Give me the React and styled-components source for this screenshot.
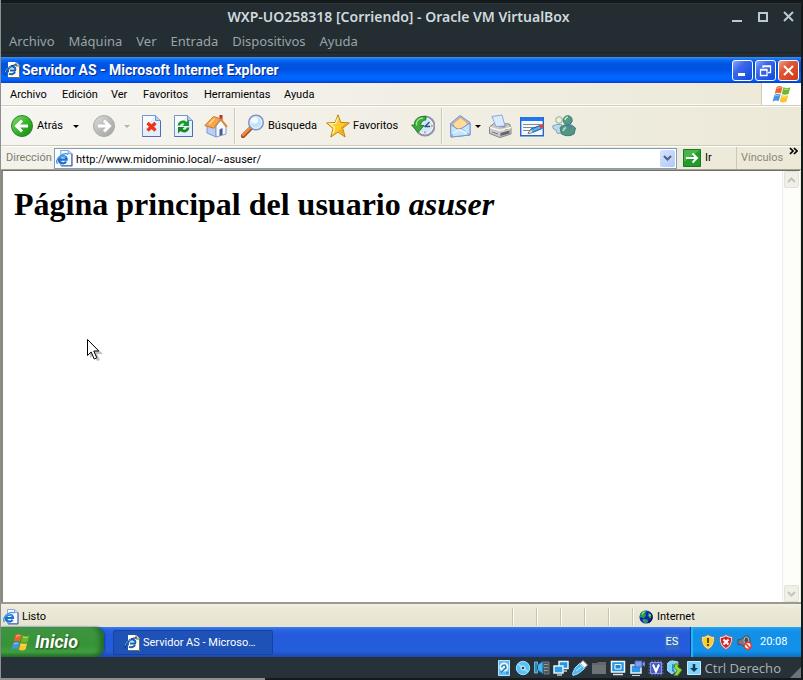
import React from "react";
import styled, { createGlobalStyle } from "styled-components";

const ui = `"Noto Sans", "Open Sans", sans-serif`;
const guest = `Roboto, "Noto Sans", sans-serif`;

const Global = createGlobalStyle`
  * { box-sizing: border-box; }
  body { margin: 0; background: #16191b; }
  button { border: 0; margin: 0; padding: 0; background: none; color: inherit; font: inherit; white-space: nowrap; }
  svg { display: block; flex: none; }
`;

const Backdrop = styled.div`
  display: flex;
  flex-direction: column;
  min-height: 100vh;
  padding: 3px 2px 2px 1px;
  background: linear-gradient(90deg, #8f8f8f 0 33%, #16191b 33%);
`;

const HostWindow = styled.div`
  flex: 1;
  display: flex;
  flex-direction: column;
  background: #232d32;
  box-shadow: 0 -3px 0 #14191b;
`;

const HostTitle = styled.header`
  display: grid;
  grid-template-columns: 1fr auto 1fr;
  align-items: center;
  height: 27px;
  padding-right: 5px;
  border-top: 1px solid #2c363a;
  color: #d0d9dc;
  font: 600 14px/20px ${ui};
`;

const HostHeading = styled.span`
  grid-column: 2;
`;

const HostControls = styled.div`
  display: flex;
  justify-content: flex-end;
  gap: 12px;
`;

const HostControl = styled.button`
  width: 14px;
  height: 14px;
  color: #bdc9ce;
`;

const HostMenu = styled.nav`
  display: flex;
  gap: 14px;
  height: 23px;
  padding-left: 8px;
  border-bottom: 1px solid #182023;
  color: #9aa4a8;
  font: 13px/22px ${ui};
`;

const Guest = styled.main`
  flex: 1;
  display: flex;
  flex-direction: column;
  margin-top: 4px;
  background: #ece9d8;
  color: #000;
  font: 11px/16px ${guest};
`;

const IETitle = styled.header`
  display: flex;
  align-items: center;
  gap: 2px;
  height: 26px;
  padding: 0 2px 0 3px;
  background: linear-gradient(#3c8cf5 0, #0a6af2 3px, #0054e3 7px, #0052e0 13px, #0066ff 19px, #0064fb 23px, #003dd0 26px);
  color: #fff;
`;

const IEHeading = styled.h2`
  flex: 1;
  margin: 0;
  font: 700 14px/20px ${guest};
  text-shadow: 1px 1px 0 #0a2a80;
`;

const WinButton = styled.button`
  display: grid;
  place-items: center;
  width: 21px;
  height: 21px;
  border: 1px solid #fff;
  border-radius: 3px;
  background: ${(p) =>
    p.$close
      ? "linear-gradient(135deg, #f0a088, #e0583a 35%, #cf3a12)"
      : "linear-gradient(135deg, #8aa8f8, #3b68ec 35%, #1048dc)"};
`;

const MenuRow = styled.div`
  display: flex;
  height: 23px;
  border-bottom: 1px solid #cfccb9;
  background: linear-gradient(90deg, #f6f5f2, #ece9d8);
  box-shadow: inset 0 -1px 0 #fbfaf4;
`;

const MenuItems = styled.nav`
  flex: 1;
  display: flex;
  gap: 16px;
  padding-left: 9px;
  line-height: 21px;
`;

const MenuItem = styled.button`
  width: ${(p) => p.$w}px;
  text-align: left;
`;

const FlagBox = styled.div`
  display: grid;
  place-items: center;
  width: 40px;
  border-left: 1px solid #cfccb9;
  background: #fff;
`;

const Toolbar = styled.div`
  display: flex;
  align-items: center;
  gap: 8px;
  height: 40px;
  padding-left: 9px;
  border-top: 1px solid #fff;
  border-bottom: 1px solid #cfccb9;
  background: linear-gradient(90deg, #f6f5f1, #ece9d8);
`;

const ToolButton = styled.button`
  display: flex;
  align-items: center;
  gap: 3px;
  width: ${(p) => p.$w || 24}px;
  height: 32px;
`;

const Caret = styled.span`
  margin-left: auto;
  margin-right: ${(p) => p.$inset || 0}px;
  border: solid transparent;
  border-width: 3px 3px 0;
  border-top-color: ${(p) => (p.$dim ? "#b8b5a6" : "#000")};
`;

const Divider = styled.span`
  width: 1px;
  height: 36px;
  margin: 0 -2px;
  background: #cbc8b6;
  box-shadow: 1px 0 0 #faf9f3;
`;

const AddressRow = styled.form`
  display: flex;
  align-items: center;
  height: 24px;
  padding: 0 3px 0 5px;
  border-top: 1px solid #fff;
  border-bottom: 1px solid #a5a292;
  background: linear-gradient(90deg, #f3f2ec, #ece9d8);
  line-height: 18px;
`;

const AddressLabel = styled.label`
  width: 48px;
  color: #7d7b70;
`;

const Combo = styled.div`
  flex: 1;
  display: flex;
  align-items: center;
  height: 21px;
  padding: 1px;
  border: 1px solid #7f9db9;
  background: #fff;
`;

const AddressInput = styled.input`
  flex: 1;
  min-width: 0;
  height: 19px;
  border: 0;
  padding: 2px 3px 0;
  outline: 0;
  background: none;
  font: 11px/16px ${guest};
`;

const DropButton = styled.button`
  display: grid;
  place-items: center;
  width: 15px;
  height: 17px;
  border-radius: 2px;
  background: linear-gradient(135deg, #d5e2ff, #b1c9f7);
`;

const GoButton = styled.button`
  display: flex;
  align-items: center;
  gap: 4px;
  width: 53px;
  margin-left: 6px;
`;

const Links = styled.button`
  display: flex;
  justify-content: space-between;
  width: 62px;
  height: 22px;
  padding-left: 4px;
  border-left: 1px solid #cbc8b6;
  color: #8a887c;
  line-height: 22px;
`;

const Viewport = styled.section`
  position: relative;
  flex: 1;
  display: flex;
  margin-right: 1px;
  border: solid #716f64;
  border-width: 1px 0 0 2px;
  border-left-color: #8b897c;
  background: #fff;
`;

const Page = styled.article`
  flex: 1;
  padding: 15px 11px;

  h1 {
    margin: 0;
    font: 700 32px/36px "Liberation Serif", "Times New Roman", serif;
  }
`;

const Scrollbar = styled.div`
  display: flex;
  flex-direction: column;
  justify-content: space-between;
  width: 18px;
  border-left: 1px solid #eeede5;
  background: #fdfdfa;
`;

const ScrollButton = styled.button`
  display: grid;
  place-items: center;
  height: 17px;
  margin: 0 1px;
  border: 1px solid #e4e2d6;
  border-radius: 2px;
  background: #f1f0e8;
`;

const Pointer = styled.svg`
  position: absolute;
  left: 84px;
  top: 168px;
`;

const StatusBar = styled.footer`
  display: flex;
  align-items: center;
  height: 25px;
  border-top: 2px solid #9c9a8c;
  padding: 2px 0 0 2px;
  background: linear-gradient(#f2f0e4, #ece9d8 5px, #e6e3d0);
`;

const StatusText = styled.div`
  flex: 1;
  display: flex;
  align-items: center;
  gap: 3px;
`;

const StatusCell = styled.div`
  display: flex;
  align-items: center;
  gap: 4px;
  width: ${(p) => p.$w || 24}px;
  height: 18px;
  padding-left: 6px;
  border-left: 1px solid #c8c5b3;
  box-shadow: inset 1px 0 0 #fbfaf3;
`;

const Taskbar = styled.div`
  display: flex;
  height: 30px;
  background: linear-gradient(#3a80f0 0, #2a63e0 3px, #245bdc 8px, #245edb 24px, #1c48b4 30px);
  color: #fff;
`;

const StartButton = styled.button`
  display: flex;
  align-items: center;
  gap: 4px;
  width: 103px;
  padding-left: 9px;
  border-radius: 0 9px 9px 0;
  background: linear-gradient(#5aa85a 0, #3d953d 4px, #369336 18px, #419f41 25px, #26752a 30px);
  box-shadow: inset -4px 0 5px #23692a, 1px 0 2px #163f9e;
  font: italic 700 18px/26px ${guest};
  text-shadow: 1px 1px 2px #1b4d1d;
`;

const TaskButton = styled.button`
  display: flex;
  align-items: center;
  gap: 3px;
  width: 160px;
  height: 25px;
  margin: 3px auto 0 9px;
  padding-left: 10px;
  border: 1px solid #1742a0;
  border-radius: 2px;
  background: #1e52b7;
  line-height: 18px;
`;

const Language = styled.button`
  align-self: center;
  width: 14px;
  height: 16px;
  margin-right: 12px;
  background: #316ac5;
`;

const Tray = styled.div`
  display: flex;
  align-items: center;
  gap: 4px;
  width: 110px;
  padding-left: 8px;
  border-left: 2px solid #1cb8f4;
  background: linear-gradient(#22a8f4 0, #1290e8 4px, #1291ea 24px, #0d70c4 30px);
  box-shadow: -1px 0 0 #0f3a92;
  line-height: 18px;
`;

const Clock = styled.time`
  margin-left: 4px;
`;

const HostStatus = styled.footer`
  display: flex;
  align-items: center;
  justify-content: flex-end;
  gap: 3px;
  height: 21px;
  background: #263238;
  color: #a3adb1;
  font: 13px/20px ${ui};
`;

const HostKey = styled.span`
  margin-right: 6px;
`;

const S = ({ w = 16, h = w, v = "0 0 16 16", children }) => (
  <svg width={w} height={h} viewBox={v} fill="none" aria-hidden="true">{children}</svg>
);

const Letter = () => (
  <>
    <path d="M2.500 9H10C9.800 4.800 3 4.600 2.700 9c0 4 5.300 4.600 6.800 1.800" stroke="#1c6fce" strokeWidth="2.200" />
    <path d="M3 7.500C4 5 8 5 9 7.300" stroke="#6cc0f4" />
  </>
);

const IEIcon = ({ size = 16 }) => (
  <S w={size}>
    <path d="M4.500.5h7l3.500 3v11H4.500z" fill="#f6f9ff" stroke="#8ea8da" />
    <path d="M11.500.5v3H15" fill="#c8d8f6" stroke="#8ea8da" />
    <path d="M15 3.500v11.500H5" stroke="#49619c" />
    <Letter />
    <path d="M1.500 13C-2 9.500 6 1.500 11.500 4" stroke="#3c9be8" strokeWidth="1.300" />
  </S>
);

const IEDocIcon = () => (
  <S>
    <path d="M4 0h8l4 4v12H4z" fill="#fffdf0" />
    <path d="M12 0v4h4" fill="#d5d2bd" stroke="#77746a" />
    <path d="M15.500 4v11.500H4" stroke="#6c6a60" />
    <path d="M4 10.500C3 6 7 3.500 10 5c1.700.8 1.500 2.500 1 3.500H6m5 1.500c-1 2-4 3-6 1.500" stroke="#1760b8" strokeWidth="2" />
    <path d="M6 6.500c1-1 3-1 3.500 0" stroke="#5dbcf1" />
    <path d="M1.500 13.500C-1 9 7 2 12.500 3" stroke="#153a80" strokeWidth="1.400" />
    <path d="M1 10.500c1-3 3-5 6-6" stroke="#61b6ed" />
  </S>
);

const Flag = ({ w = 20 }) => (
  <S w={w} v="0 0 20 20">
    <path d="M5.200 3.200C7 1.600 8.800 1.800 11 2.800L9.400 9C7.300 8 5.500 8 3.500 9.400z" fill="#f0622a" />
    <path d="M11.900 3.200c2 1 4 1 6.600-.1l-1.700 6.300c-2.300 1.200-4.500 1-6.500.1z" fill="#6cb928" />
    <path d="M3.200 10.400c2-1.300 3.800-1.400 5.900-.4l-1.700 6.300c-2-1-3.900-.9-6 .5z" fill="#4692e4" />
    <path d="M10 10.500c2 1 4.200 1.100 6.500 0l-1.700 6.200c-2.300 1.200-4.300 1.100-6.400.1z" fill="#fcc52a" />
    <path d="M5.500 4.500q2.200-1.700 4.500-.8M12.500 4.700q2 .8 4.200.2M3.500 11.600q2-1.300 4.300-.5M10.500 12q2 .8 4 .2" stroke="#fff" strokeOpacity=".45" />
  </S>
);

const RoundArrow = ({ forward }) => (
  <S w={24} v="0 0 24 24">
    <defs>
      <linearGradient id={forward ? "fw" : "bk"} x1="0" y1="0" x2="1" y2="1">
        <stop stopColor={forward ? "#dededc" : "#8bdc72"} />
        <stop offset=".5" stopColor={forward ? "#bbbbb9" : "#36b52c"} />
        <stop offset="1" stopColor={forward ? "#a4a4a2" : "#168514"} />
      </linearGradient>
    </defs>
    <circle cx="12" cy="12" r="10.500" fill={forward ? "url(#fw)" : "url(#bk)"} stroke={forward ? "#a9a9a6" : "#27852a"} />
    <path d={forward ? "M6 12h11M12 6.500l5.500 5.500-5.500 5.500" : "M18 12H7M12 6.500 6.500 12l5.500 5.500"} stroke="#fff" strokeWidth="3" />
  </S>
);

const Sheet = ({ children }) => (
  <S w={24} v="0 0 24 24">
    <path d="M2.500 1.500h13l5 5v16h-18z" fill="#e3eeff" stroke="#7692cf" />
    <path d="M3 2h12l-12 14z" fill="#fff" fillOpacity=".7" />
    <path d="M15.500 1.500v5h5" fill="#b5cdf6" stroke="#7692cf" />
    <path d="M20.500 7v15.500h-18" stroke="#506bb0" />
    {children}
  </S>
);

const Stop = () => (
  <Sheet><path d="m7.500 9 8 7.500m0-7.500-8 7.500" stroke="#ee3514" strokeWidth="3.400" /></Sheet>
);

const Refresh = () => (
  <Sheet>
    <path d="M5.500 11.500C6.500 6 12 5.500 14.500 8L17 5.500V12h-6.500l2-2c-1.500-1.200-3.500-.8-4.500 1.500z" fill="#1a9a24" />
    <path d="M17.500 13.500C16.500 19 11 19.500 8.500 17L6 19.500V13h6.500l-2 2c1.500 1.200 3.500.8 4.500-1.500z" fill="#118a1c" />
  </Sheet>
);

const Home = () => (
  <S w={24} v="0 0 24 24">
    <path d="M15.500 1h3v8h-3z" fill="#b3362c" />
    <path d="M3 12v7l9 4V11z" fill="#b9cdf5" stroke="#7e97cf" />
    <path d="m12 12 5-6 5 7v7l-10 3z" fill="#f6f8ff" stroke="#8698c5" />
    <path d="M.8 11.500 9.500 2.500l7 2.300-6.700 9.500z" fill="#f7a545" stroke="#d07a28" />
    <path d="m16.500 4.800 6.500 8" stroke="#e08a35" strokeWidth="2" />
    <path d="M15.500 15.500 18.500 14v6.800l-3 1z" fill="#455a98" />
    <path d="M5 10.500 10.500 4.500" stroke="#ffd69a" strokeWidth="1.500" />
  </S>
);

const Search = () => (
  <S w={24} v="0 0 24 24">
    <path d="m10 14-8 8" stroke="#9d512a" strokeWidth="4.500" strokeLinecap="round" />
    <path d="m9.500 13.500-7.500 7.500" stroke="#f18a45" strokeWidth="2.500" strokeLinecap="round" />
    <circle cx="15" cy="8.500" r="7.300" fill="#bfe3fc" stroke="#8392c4" strokeWidth="1.500" />
    <circle cx="15" cy="8.500" r="5.700" stroke="#e8f6ff" />
    <ellipse cx="13.500" cy="6.500" rx="3.500" ry="3" fill="#f5fcff" />
  </S>
);

const Star = () => (
  <S w={24} v="0 0 24 24">
    <path d="m12 .8 2.800 7.600 8.600.5-6.700 5.300 2.400 8.800-7.100-5-7.200 5 2.300-8.600L.6 9l8.500-.6z" fill="#ffcb30" stroke="#bb820c" strokeLinejoin="round" />
    <path d="m12 3.500-2.300 5.900-5.700.4 4.500 3.800-1.500 6" stroke="#fff0a2" strokeWidth="1.500" />
    <path d="m13 16 4 3.300-1.500-5.300 4.500-4" stroke="#eda716" strokeWidth="1.300" />
  </S>
);

const History = () => (
  <S w={24} v="0 0 24 24">
    <circle cx="14" cy="12" r="9.500" fill="#cfe7f8" stroke="#8b97a8" strokeWidth="2" />
    <circle cx="14" cy="12" r="7.800" stroke="#f4fbff" />
    <path d="m13.500 13 5-5M13.500 12.500H19" stroke="#2c4c80" strokeWidth="1.300" />
    <path d="M14 4.500v2m0 11v2m6-7.500h2" stroke="#ee7951" strokeWidth="1.500" />
    <path d="M15 2.500C6 1.500 3 7 3.500 11H.7L7 18.500l6-7H9.500c0-3 2-5 5.500-6z" fill="#3aaa38" stroke="#227e2d" />
    <path d="M12 4c-5 0-7 4-6.500 7.500" stroke="#a5e58f" strokeWidth="1.300" />
  </S>
);

const Mail = () => (
  <S w={24} v="0 0 24 24">
    <path d="M2.500 9.500 12 1.500l10 7V21l-19 2z" fill="#aabdf0" stroke="#7c8cca" />
    <path d="m5 9.500 7.500-6 7 5.500-1.500 5-11 1z" fill="#ffdc9a" stroke="#dfa258" />
    <path d="M2.500 10.500 11 16l11-7V21l-19 2z" fill="#c3e6fc" stroke="#7c91d0" />
    <path d="m3 22.500 7-7m12 5.500-8.500-6" stroke="#7c91d0" />
    <path d="m5 20 5-4h3l6 3.500" stroke="#eefaff" strokeWidth="1.500" />
  </S>
);

const Printer = () => (
  <S w={24} v="0 0 24 24">
    <path d="m1.500 13 5-4 15 1 1.500 4v6l-11 3.500-10.500-4z" fill="#c9c9c8" stroke="#848487" />
    <path d="m7 10.500 11 .5-1.500 2.500-8-.8z" fill="#77777a" />
    <path d="M4 2.500 14 1l3 11-9 .5z" fill="#dceaff" stroke="#89a8df" />
    <path d="m2 13.500 10 3 11-3" stroke="#f7f7f5" strokeWidth="1.500" />
    <path d="m12.500 19 9-2.500v3l-9 2.500z" fill="#65656a" />
    <path d="m4 18 6 2" stroke="#77777c" />
    <path d="M17 15.500h3" stroke="#dfae4f" />
  </S>
);

const Edit = () => (
  <S w={24} v="0 0 24 24">
    <path d="M.7 3.700h22.600v18H.7z" fill="#f6faff" stroke="#2467cf" strokeWidth="1.400" />
    <path d="M1 3h22v4H1z" fill="#2377ea" />
    <path d="M3 10.500h17M3 13.500h16M3 16.500h8" stroke="#838b99" />
    <path d="M8 19.500 11 15l9-3.500 2 3-9.500 4z" fill="#55aef1" stroke="#235690" />
    <path d="m8 19.500 3-4 1.500 3z" fill="#f5cf8c" />
    <circle cx="21.500" cy="12" r="2" fill="#e54324" />
  </S>
);

const People = () => (
  <S w={24} v="0 0 24 24">
    <path d="m1.500 15-1-3 4-1.500h5l2 8-6 1-2-4z" fill="#b9dae8" stroke="#7ca3bf" />
    <circle cx="7" cy="6" r="3.300" fill="#edf0cd" stroke="#91aaaa" />
    <path d="M9.500 20 8 13.500 12 11h7.500l4 3-1.500 6q-6 3.500-12.500 0z" fill="#4f997e" stroke="#44747c" />
    <circle cx="15.700" cy="6.200" r="4.500" fill="#529c86" stroke="#41767d" />
    <path d="M13 6q.5-3 3-3M11 17q1-3 3-3.500" stroke="#b9e3bd" strokeWidth="1.700" />
    <path d="m16 12 1 6 3-6" fill="#5d7dba" />
  </S>
);

const Go = () => (
  <S w={18} v="0 0 18 18">
    <path d="M.5.5h17v17H.5z" fill="#239b2b" stroke="#19782a" />
    <path d="M1 1h16L1 13z" fill="#62c45a" fillOpacity=".6" />
    <path d="M3 9h11M9.500 4.500 14 9l-4.500 4.500" stroke="#fff" strokeWidth="2" />
  </S>
);

const Globe = () => (
  <S w={14}>
    <circle cx="8" cy="8" r="7.500" fill="#1420c0" />
    <path d="M2 4c2-3 6-4 7-2L7 4l1 2-2 3-5-1zM11 3l4 3v4l-3-1-2-3zM5 10l5 1v3l-4 1-2-3z" fill="#22a545" />
    <path d="m3 5 3-3M12 5l1 2" stroke="#9ade74" strokeWidth="1.500" />
    <path d="M14 4q3 6-3 10.500" stroke="#091040" strokeWidth="1.500" />
  </S>
);

const Shield = ({ red }) => (
  <S w={14} h={16} v="1 0 14 16">
    <path d="M8 .5c2 1.600 4 2 6.500 2 .2 6-1 10.500-6.500 13-5.500-2.500-6.700-7-6.500-13 2.500 0 4.500-.4 6.500-2z" fill="#dfe3e6" stroke="#77727a" />
    <path d="M8 2.200c1.700 1 3.200 1.600 5.200 1.700 0 5-1.400 8-5.200 10C4.200 12 2.800 9 2.800 4c2-.1 3.500-.7 5.200-1.800z" fill={red ? "#da2029" : "#fbd01a"} />
    {red ? <path d="m5.500 5.500 5 5m0-5-5 5" stroke="#fff" strokeWidth="2" /> : <path d="M8 4v5m0 1v2" stroke="#3d350d" strokeWidth="1.700" />}
  </S>
);

const Muted = () => (
  <S w={15}>
    <path d="M1 5h3l5-4h3q4 5 0 10L9 13l-5-3H1z" fill="#777a80" stroke="#44474f" />
    <ellipse cx="10" cy="6" rx="2.500" ry="4" fill="#4a4d54" stroke="#b9bcc2" />
    <circle cx="11.500" cy="11.500" r="3.700" fill="#fff" stroke="#df3e31" strokeWidth="1.700" />
    <path d="m9 9 5 5" stroke="#df3e31" strokeWidth="1.700" />
  </S>
);

const deviceIcons = [
  ["Discos duros", <>
    <path d="M2.500.500h11v15h-11z" fill="#5dbcf4" stroke="#b9e6ff" />
    <circle cx="8" cy="7" r="4.500" fill="#eefaff" />
    <path d="M6 7.500A2 2 0 1 1 8.500 9L5 12.500" stroke="#247bb4" strokeWidth="1.500" />
    <path d="M10 13h2.500" stroke="#176596" />
  </>],
  ["Unidades ópticas", <>
    <circle cx="8" cy="8" r="6.700" fill="#55c3f8" stroke="#a5e4ff" />
    <path d="m8 8-5-4M8 8l5 4" stroke="#8edcff" strokeWidth="2" />
    <circle cx="8" cy="8" r="2" fill="#17506e" stroke="#fff" />
  </>],
  ["Audio", <>
    <path d="M9 2h6v12h-5V9z" fill="#4b5458" stroke="#747e82" />
    <path d="M10 4.500h4M10 7.500h4M10 10.500h4" stroke="#929b9e" />
    <path d="M.5 2h3v11h-3z" fill="#2f86b8" stroke="#66bbe5" />
    <path d="M3.500 5 9 1v13l-5.500-4z" fill="#46b4ef" stroke="#205f82" />
  </>],
  ["Red", <>
    <path d="M6 1.500h9v7H6z" fill="#2297e4" stroke="#e6f4fc" strokeWidth="1.500" />
    <path d="M1 6h9v7H1z" fill="#2b9fe8" stroke="#e6f4fc" strokeWidth="1.500" />
    <path d="M4 15h5M10 11h4" stroke="#bac9d1" strokeWidth="1.500" />
  </>],
  ["USB", <>
    <path d="m11 .5 4.500 4.500-3 3L8 3.500z" fill="#fff" stroke="#8b959a" />
    <path d="m7.500 3.500 5 5-6 5-5.500 2-.5-2L3 8z" fill="#4db9f5" stroke="#a1e0ff" />
    <path d="m4 11 5-4" stroke="#b6ebff" />
  </>],
  ["Carpetas compartidas", <>
    <path d="M1 3h5l1-1h8v12H1z" fill="#646769" /><path d="M1 5h14v9H1z" fill="#6f7274" />
  </>],
  ["Pantalla", <>
    <path d="M1.500 1.500h13v10.500h-13z" fill="#2496e3" stroke="#eef8fc" strokeWidth="1.500" />
    <path d="M5 4.500h6v4.500H5z" fill="#1b85cf" stroke="#fff" />
    <path d="M3 14.500h10" stroke="#dce4e7" strokeWidth="1.500" />
  </>],
  ["Grabación", <>
    <path d="M2 5h10v8H2z" fill="#2a99e2" stroke="#e7f4fc" strokeWidth="1.500" />
    <path d="M6 1h7v6H6zM13 4l3-3v6z" fill="#7e9cf0" stroke="#4b63ba" />
    <path d="M3 15.500h8" stroke="#c7d6df" />
  </>],
  ["Procesador", <>
    <path d="M4 .500v15M7 .500v15M10 .500v15M13 .500v15M.5 4h15M.5 7h15M.5 10h15M.5 13h15" stroke="#6678cb" />
    <path d="M2.500 2.500h11v11h-11z" fill="#4a5cc4" stroke="#8899ed" />
    <path d="m5 4.500 3 7 3-7" stroke="#fff" strokeWidth="2" />
  </>],
  ["Integración del ratón", <>
    <path d="M6 1a6 6 0 0 0-5 10l4 3 4-3 2-9z" fill="#7bd4fb" stroke="#a9e5ff" />
    <path d="m5 4 4 1v3L6 8l3 6-4-3z" fill="#318ac4" />
    <path d="M8 4h4l-1.500 2.500L15 10l-4.500 5.500H7l3-5-3-3z" fill="#92d840" stroke="#4e8b24" />
  </>],
  ["Captura del teclado", <>
    <path d="M1.500 1.500h13v13h-13z" fill="#7ed3ff" stroke="#c0edff" />
    <path d="M8 4v6" stroke="#123b56" strokeWidth="2.500" />
    <path d="M4 8h8l-4 4z" fill="#123b56" />
  </>],
];

const Chevron = ({ up, color }) => (
  <S w={9} h={6} v="0 0 9 6"><path d={up ? "M1 5l3.500-3.500L8 5" : "m1 1 3.500 3.500L8 1"} stroke={color} strokeWidth="2" /></S>
);

export default function App() {
  return (
    <Backdrop>
      <Global />
      <HostWindow>
        <HostTitle>
          <HostHeading>WXP-UO258318 [Corriendo] - Oracle VM VirtualBox</HostHeading>
          <HostControls>
            <HostControl aria-label="Minimizar máquina"><S w={14} v="0 0 14 14"><path d="M2 11h10" stroke="currentColor" strokeWidth="2" /></S></HostControl>
            <HostControl aria-label="Maximizar máquina"><S w={14} v="0 0 14 14"><path d="M3 3h8v8H3z" stroke="currentColor" strokeWidth="2" /></S></HostControl>
            <HostControl aria-label="Cerrar máquina"><S w={14} v="0 0 14 14"><path d="m2 2 9 9m0-9-9 9" stroke="currentColor" strokeWidth="2" /></S></HostControl>
          </HostControls>
        </HostTitle>
        <HostMenu>
          {["Archivo", "Máquina", "Ver", "Entrada", "Dispositivos", "Ayuda"].map((t) => <button key={t}>{t}</button>)}
        </HostMenu>
        <Guest>
          <IETitle>
            <IEDocIcon />
            <IEHeading>Servidor AS - Microsoft Internet Explorer</IEHeading>
            <WinButton aria-label="Minimizar"><S w={15} v="0 0 15 15"><path d="M3 11.500h7" stroke="#fff" strokeWidth="3" /></S></WinButton>
            <WinButton aria-label="Restaurar"><S w={15} v="0 0 15 15"><path d="M5 5V3h7.500v6.500H10M5 3.500h8M2.500 6.500H9v6H2.500zM2 7h7" stroke="#fff" strokeWidth="1.300" /></S></WinButton>
            <WinButton $close aria-label="Cerrar"><S w={15} v="0 0 15 15"><path d="m3 3 9 9m0-9-9 9" stroke="#fff" strokeWidth="2" /></S></WinButton>
          </IETitle>
          <MenuRow>
            <MenuItems>
              {[["Archivo", 36], ["Edición", 33], ["Ver", 16], ["Favoritos", 45], ["Herramientas", 64], ["Ayuda", 32]].map(([t, w]) => <MenuItem key={t} $w={w}>{t}</MenuItem>)}
            </MenuItems>
            <FlagBox><Flag w={21} /></FlagBox>
          </MenuRow>
          <Toolbar>
            <ToolButton $w={74}><RoundArrow />Atrás<Caret $inset={5} /></ToolButton>
            <ToolButton $w={40} disabled aria-label="Adelante"><RoundArrow forward /><Caret $dim $inset={2} /></ToolButton>
            <ToolButton aria-label="Detener"><Stop /></ToolButton>
            <ToolButton aria-label="Actualizar"><Refresh /></ToolButton>
            <ToolButton aria-label="Inicio"><Home /></ToolButton>
            <Divider />
            <ToolButton $w={77}><Search />Búsqueda</ToolButton>
            <ToolButton $w={77}><Star />Favoritos</ToolButton>
            <ToolButton aria-label="Historial"><History /></ToolButton>
            <Divider />
            <ToolButton $w={32} aria-label="Correo"><Mail /><Caret /></ToolButton>
            <ToolButton aria-label="Imprimir"><Printer /></ToolButton>
            <ToolButton aria-label="Modificar"><Edit /></ToolButton>
            <ToolButton aria-label="Messenger"><People /></ToolButton>
          </Toolbar>
          <AddressRow onSubmit={(e) => e.preventDefault()}>
            <AddressLabel htmlFor="address">Dirección</AddressLabel>
            <Combo>
              <IEIcon size={17} />
              <AddressInput id="address" defaultValue="http://www.midominio.local/~asuser/" />
              <DropButton type="button" aria-label="Direcciones recientes"><Chevron color="#4d6185" /></DropButton>
            </Combo>
            <GoButton><Go />Ir</GoButton>
            <Links type="button">Vínculos<S w={9} h={11} v="0 0 9 11"><path d="m1 1 3 3-3 3m4-6 3 3-3 3" stroke="#000" strokeWidth="1.700" /></S></Links>
          </AddressRow>
          <Viewport>
            <Page><h1>Página principal del usuario <em>asuser</em></h1></Page>
            <Scrollbar>
              <ScrollButton disabled aria-label="Subir"><Chevron up color="#c6c4b8" /></ScrollButton>
              <ScrollButton disabled aria-label="Bajar"><Chevron color="#c6c4b8" /></ScrollButton>
            </Scrollbar>
            <Pointer width="18" height="24" viewBox="0 0 18 24" aria-hidden="true">
              <path d="M3 3v16l4-3 3 6 3-1-3-6h6z" fill="#000" fillOpacity=".25" />
              <path d="M.5.5v16l3.700-3.500 3 7 2.600-1.200-3-6.800h5z" fill="#fff" stroke="#000" />
            </Pointer>
          </Viewport>
          <StatusBar>
            <StatusText><IEIcon />Listo</StatusText>
            <StatusCell /><StatusCell /><StatusCell /><StatusCell /><StatusCell />
            <StatusCell $w={169}><Globe />Internet</StatusCell>
          </StatusBar>
          <Taskbar>
            <StartButton><Flag w={21} />Inicio</StartButton>
            <TaskButton><IEDocIcon />Servidor AS - Microso…</TaskButton>
            <Language>ES</Language>
            <Tray><Shield /><Shield red /><Muted /><Clock>20:08</Clock></Tray>
          </Taskbar>
        </Guest>
        <HostStatus>
          {deviceIcons.map(([name, art]) => <button key={name} aria-label={name}><S>{art}</S></button>)}
          <HostKey>Ctrl Derecho</HostKey>
          <S w={11} h={21} v="0 0 11 21"><path d="M11 10v11H0z" fill="#69757b" /></S>
        </HostStatus>
      </HostWindow>
    </Backdrop>
  );
}
